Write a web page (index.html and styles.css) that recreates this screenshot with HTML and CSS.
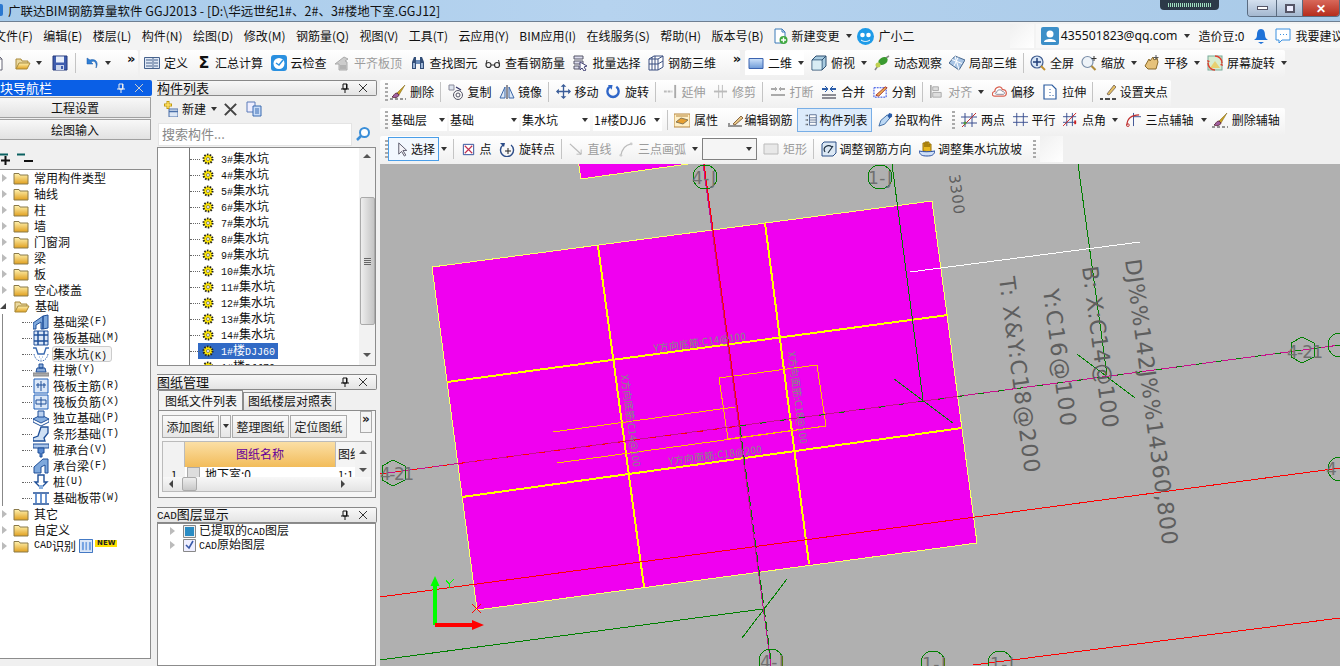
FILE: index.html
```html
<!DOCTYPE html>
<html lang="zh-CN">
<head>
<meta charset="utf-8">
<title>广联达BIM钢筋算量软件 GGJ2013</title>
<link rel="stylesheet" href="styles.css">
</head>
<body>
<svg class="sprite" xmlns="http://www.w3.org/2000/svg">
<defs>
<linearGradient id="gf" x1="0" y1="0" x2="0" y2="1"><stop offset="0" stop-color="#fff2b0"/><stop offset="1" stop-color="#e0a020"/></linearGradient>
<linearGradient id="gb" x1="0" y1="0" x2="0" y2="1"><stop offset="0" stop-color="#cfe3fa"/><stop offset="1" stop-color="#6d9ad8"/></linearGradient>
<symbol id="doc" viewBox="0 0 16 16"><path d="M3 1h7l3 3v11H3z" fill="#fff" stroke="#3a7ab8"/><path d="M10 1v3h3" fill="none" stroke="#3a7ab8"/><circle cx="11.500" cy="12" r="4" fill="#3fa83f"/><path d="M11.500 9.500v5M9 12h5" stroke="#fff" stroke-width="1.400"/></symbol>
<symbol id="docp" viewBox="0 0 16 16"><path d="M3 1h7l3 3v11H3z" fill="#fff" stroke="#667"/><path d="M10 1v3h3" fill="none" stroke="#667"/></symbol>
<symbol id="folderopen" viewBox="0 0 16 16"><path d="M1 14V4h5l1 2h6v2" fill="#ead9a0" stroke="#a98a3a"/><path d="M1 14l3-6h11l-3 6z" fill="url(#gf)" stroke="#a98a3a"/></symbol>
<symbol id="folder" viewBox="0 0 16 16"><path d="M1 3.500h5l1 1.500h8v9H1z" fill="url(#gf)" stroke="#8a7a4a"/></symbol>
<symbol id="save" viewBox="0 0 16 16"><path d="M1 1h14v14H1z" fill="#3e5cae" stroke="#25387a"/><path d="M4 1.500h8v6H4z" fill="#e8eefa"/><path d="M4 10h8v5H4z" fill="#c9d3ea"/><path d="M9 11h2v3H9z" fill="#3e5cae"/></symbol>
<symbol id="undo" viewBox="0 0 16 16"><path d="M3 3v6h6L7 7c3-2 6 0 5 6 3-5 0-10-6-8z" fill="#2f7fd6" stroke="#1d5aa5" stroke-width=".5"/></symbol>
<symbol id="define" viewBox="0 0 16 16"><path d="M.5 2.500h15v11H.5z" fill="#dfe8f5" stroke="#46628c"/><path d="M2 5h6M2 8h6M2 11h6M10 5h4M10 8h4M10 11h4M9 3v10" stroke="#46628c"/></symbol>
<symbol id="cloudchk" viewBox="0 0 16 16"><rect width="16" height="16" y="0" rx="3" fill="#2a90e0"/><circle cx="8" cy="8.500" r="5.500" fill="#fff"/><path d="M5 8l3 2 4-5" fill="none" stroke="#2a90e0" stroke-width="1.500"/></symbol>
<symbol id="aligntop" viewBox="0 0 16 16"><path d="M1 9l9-7 4 2-3 2 2 1v8H5V9z" fill="#ccc" stroke="#aaa"/><path d="M6 11h6M6 13h6" stroke="#999"/></symbol>
<symbol id="binoc" viewBox="0 0 16 16"><path d="M2 14V7l2-5h2v12zM10 14V2h2l2 5v7z" fill="#334e78"/><path d="M6 5h4v4H6z" fill="#6d8db8"/><path d="M3 8h2v5H3zM11 8h2v5h-2z" fill="#9db6d8"/></symbol>
<symbol id="glasses" viewBox="0 0 16 16"><circle cx="3.500" cy="10" r="2.500" fill="none" stroke="#333" stroke-width="1.200"/><circle cx="12" cy="10" r="2.500" fill="none" stroke="#333" stroke-width="1.200"/><path d="M6 10h3.500M1 9l1-4M14.500 9l-1-4" stroke="#333"/></symbol>
<symbol id="batch" viewBox="0 0 16 16"><path d="M1 1h9v3H1zM1 6h9v3H1zM1 11h5v3H1z" fill="#dde" stroke="#556"/><path d="M7 7l7 4-3 1 2 3-2 1-2-3-2 2z" fill="#fff" stroke="#447"/></symbol>
<symbol id="rebar3d" viewBox="0 0 16 16"><path d="M1 4l5-3h9v11l-5 3H1zM1 4h9v11M10 4l5-3M4 2v13M7 1v14M1 9h9l5-3" fill="#fff" stroke="#3a4f80"/></symbol>
<symbol id="rect2d" viewBox="0 0 16 16"><path d="M1 3.500h14v10H1z" fill="url(#gb)" stroke="#3c64b0"/></symbol>
<symbol id="box3d" viewBox="0 0 16 16"><path d="M1 5l4-4h10v10l-4 4H1z" fill="#a8cbe0" stroke="#2c4f70"/><path d="M1 5h10v10M11 5l4-4" fill="none" stroke="#2c4f70"/><path d="M1.500 5.500h9v9h-9z" fill="#d8ecf4"/></symbol>
<symbol id="orbit" viewBox="0 0 16 16"><path d="M1 15C4 10 8 5 15 1" fill="none" stroke="#888" stroke-width="1.500"/><ellipse cx="9" cy="6" rx="5" ry="3.500" transform="rotate(-30 9 6)" fill="#3a9a30"/><circle cx="4" cy="10" r="2.500" fill="#c0d050"/></symbol>
<symbol id="local3d" viewBox="0 0 16 16"><path d="M0 8l6-7 10 4-6 10z" fill="#a8c4e4" stroke="#48688e"/><path d="M3 4.500l10 4M6 1l4 14M9 2.500L5 11" stroke="#fff"/></symbol>
<symbol id="fullscr" viewBox="0 0 16 16"><circle cx="7" cy="7" r="6" fill="#d8e6f6" stroke="#405d90" stroke-width="1.200"/><path d="M7 3v8M3 7h8" stroke="#203e78" stroke-width="1.500"/><path d="M11 11l4 4" stroke="#c09030" stroke-width="2"/></symbol>
<symbol id="zoomi" viewBox="0 0 16 16"><circle cx="6.500" cy="7" r="5.500" fill="#eef3f8" stroke="#7a8ea8" stroke-width="1.200"/><path d="M10.500 11l4 4" stroke="#b08c3c" stroke-width="2.200"/><path d="M13 1v5M10.500 3.500h5" stroke="#333"/></symbol>
<symbol id="hand" viewBox="0 0 16 16"><path d="M1 11l4-7 1 2 3-4 1 3 3-2 1 4-2 7H4z" fill="#e6c27a" stroke="#8a6a2a"/><path d="M12 0v5M9.500 2.500h5" stroke="#555"/></symbol>
<symbol id="screenrot" viewBox="0 0 16 16"><rect x="1" y="1" width="14" height="14" fill="#d8ecd0" stroke="#7a9"/><path d="M3 13l5-7 5 7z" fill="#e8d070"/><path d="M8 1a7 7 0 0 1 7 7M8 15a7 7 0 0 1-7-7" fill="none" stroke="#e04030" stroke-width="1.500"/><path d="M1 8l-1-3 3 1zM15 8l1 3-3-1z" fill="#e04030"/></symbol>
<symbol id="brush" viewBox="0 0 16 16"><path d="M15 1L7 9l2 2z" fill="#c9a020" stroke="#7a6010" stroke-width=".5"/><path d="M7 9c-3 0-3 3-5 4 2 1 6 1 7-2z" fill="#a060a0" stroke="#634"/><path d="M0 15h16" stroke="#333" stroke-dasharray="3 2"/></symbol>
<symbol id="copyc" viewBox="0 0 16 16"><path d="M1 1h5v5H1z" fill="#dde4ee" stroke="#889"/><circle cx="10" cy="11" r="4.500" fill="none" stroke="#556"/><circle cx="10" cy="11" r="2" fill="none" stroke="#556"/><path d="M8 3l5 3" stroke="#336" stroke-width="1.200"/></symbol>
<symbol id="mirror" viewBox="0 0 16 16"><path d="M8 1v14" stroke="#223"/><path d="M6 3L1 14h5zM10 3l5 11h-5z" fill="#dce8f6" stroke="#3a66a8"/></symbol>
<symbol id="move" viewBox="0 0 16 16"><path d="M8 1v14M1 8h14" stroke="#3a5c98" stroke-width="1.400"/><path d="M8 0l3 3H5zM8 16l-3-3h6zM0 8l3-3v6zM16 8l-3 3V5z" fill="#3a5c98"/></symbol>
<symbol id="rotateb" viewBox="0 0 16 16"><path d="M4 3a6 6 0 1 0 7 0" fill="none" stroke="#2f66c8" stroke-width="2.500"/><path d="M2 1l5 0-1 5z" fill="#2f66c8"/></symbol>
<symbol id="extend" viewBox="0 0 16 16"><path d="M1 8h9" stroke="#bbb" stroke-width="2" stroke-dasharray="3 1"/><path d="M13 1v14" stroke="#aaa" stroke-width="2"/></symbol>
<symbol id="trim" viewBox="0 0 16 16"><path d="M1 8h14" stroke="#bbb" stroke-width="2"/><path d="M6 1v14M10 1v14" stroke="#bbb"/></symbol>
<symbol id="breakg" viewBox="0 0 16 16"><path d="M1 5h5M10 5h5M1 11h14" stroke="#aaa" stroke-width="2"/><path d="M5 3l2 2-2 2M11 3L9 5l2 2" stroke="#aaa" fill="none"/></symbol>
<symbol id="merge" viewBox="0 0 16 16"><path d="M1 11h14M1 14h14" stroke="#223" /><path d="M1 5h5M10 5h5" stroke="#2a5caa" stroke-width="2"/><path d="M4 2l3 3-3 3M12 2L9 5l3 3" fill="none" stroke="#2a5caa"/></symbol>
<symbol id="split" viewBox="0 0 16 16"><path d="M1 4h13v10H1z" fill="#fff" stroke="#1d3ce0" stroke-dasharray="2 1"/><path d="M3 12L13 3l2 1-9 9z" fill="#e8b050" stroke="#a33"/></symbol>
<symbol id="alignl" viewBox="0 0 16 16"><path d="M2 1v14" stroke="#999" stroke-width="1.500"/><path d="M4 3h6v4H4zM4 9h9v5H4z" fill="#ddd" stroke="#aaa"/></symbol>
<symbol id="offset" viewBox="0 0 16 16"><path d="M3 13C-1 13 0 8 3 8 3 3 10 1 11 6c5-1 6 7 1 7z" fill="#fff" stroke="#d86050" stroke-width="1.300"/><path d="M5 11c-2 0-2-2 0-2 0-3 5-4 6-1 3 0 3 3 1 3z" fill="none" stroke="#889"/></symbol>
<symbol id="stretch" viewBox="0 0 16 16"><path d="M2 1h8l4 4v10H2z" fill="#fff" stroke="#2c5ca0" stroke-width="1.200"/><path d="M8 5v1M8 8v1M8 11v1M11 11v1" stroke="#2c5ca0"/></symbol>
<symbol id="grip" viewBox="0 0 16 16"><path d="M7 10l7-9 2 2-7 8z" fill="#e8c060" stroke="#876"/><path d="M0 15h3M5 15h5M12 15h4" stroke="#111" stroke-width="1.500"/></symbol>
<symbol id="attr" viewBox="0 0 16 16"><path d="M0 2h16v13H0z" fill="#fff0c8" stroke="#b8863c"/><path d="M2 10l5-4 7 2-5 4z" fill="#e8a030" stroke="#875"/><path d="M2 4h12" stroke="#b8863c"/></symbol>
<symbol id="editr" viewBox="0 0 16 16"><path d="M1 14h14M1 12h2" stroke="#333"/><path d="M6 12l8-8 2 2-8 7z" fill="#e8c888" stroke="#864"/></symbol>
<symbol id="listi" viewBox="0 0 16 16"><path d="M1 2h3M1 8h3M1 14h3" stroke="#333" stroke-dasharray="1 1" stroke-width="2"/><path d="M6 1h9v14H6zM6 5h9M6 8h9M6 11h9" fill="#fff" stroke="#38507a"/></symbol>
<symbol id="pick" viewBox="0 0 16 16"><path d="M1 15l2-6 7-6 3 3-6 7z" fill="#bcd8f4" stroke="#3a68a0"/><path d="M10 4l2-3 3 1 0 3-3 2z" fill="#2a5ca8"/></symbol>
<symbol id="twopt" viewBox="0 0 16 16"><path d="M4 1v14M11 1v14M0 5h16M0 11h16" stroke="#3a4f90"/><path d="M1 15L15 1" stroke="#c03030"/><circle cx="4" cy="11" r="1.500" fill="#4a9a40"/></symbol>
<symbol id="para" viewBox="0 0 16 16"><path d="M4 1v14M11 1v14M0 5h16M0 11h16" stroke="#3a4f90"/></symbol>
<symbol id="anglei" viewBox="0 0 16 16"><path d="M4 1v14M10 1v14M0 5h14M0 11h14" stroke="#3a4f90"/><path d="M0 15L14 1" stroke="#d02020"/><path d="M13 9v4" stroke="#d02020" stroke-width="2"/></symbol>
<symbol id="arc3" viewBox="0 0 16 16"><path d="M8 1v14M8 5h8" stroke="#3a4f90"/><path d="M1 14C1 7 6 3 14 3" fill="none" stroke="#c03030" stroke-width="1.200"/><circle cx="2" cy="14" r="1.500" fill="none" stroke="#c03030"/></symbol>
<symbol id="cursor" viewBox="0 0 16 16"><path d="M4 1v12l3-3 3 5 1.500-1-3-5h4z" fill="#f4f4f8" stroke="#556"/></symbol>
<symbol id="point" viewBox="0 0 16 16"><path d="M2.500 2.500h11v11h-11z" fill="#fff" stroke="#2c4c98"/><path d="M4 4l8 8M12 4l-8 8" stroke="#c03050" stroke-width="1.200"/></symbol>
<symbol id="rotpt" viewBox="0 0 16 16"><path d="M4 4a6.500 6.500 0 1 0 8 0" fill="none" stroke="#2c4c88" stroke-width="1.400"/><path d="M1 2l5 0-1 4z" fill="#2c4c88"/><path d="M9 7v6M6 10h6" stroke="#222"/></symbol>
<symbol id="lineg" viewBox="0 0 16 16"><path d="M1 2l12 11" stroke="#bbb" stroke-width="1.400"/><path d="M13 8v5H8" fill="none" stroke="#bbb"/></symbol>
<symbol id="arcg" viewBox="0 0 16 16"><path d="M2 15C3 7 7 3 13 2" fill="none" stroke="#bbb" stroke-width="1.400"/><circle cx="13" cy="2" r="1.500" fill="#ccc"/><circle cx="2" cy="14" r="1.500" fill="#ccc"/></symbol>
<symbol id="rectg" viewBox="0 0 16 16"><path d="M1 3h14v10H1z" fill="#e8e8e8" stroke="#bbb"/></symbol>
<symbol id="adjust" viewBox="0 0 16 16"><path d="M3 1h12v11l-3 3H1V3z" fill="#dce8f4" stroke="#2c5088"/><path d="M4 11c-3-5 3-8 7-5M7 12l5-7" fill="none" stroke="#234" stroke-width="1.200"/></symbol>
<symbol id="handw" viewBox="0 0 16 16"><path d="M4 10V2h2v4-5h2v5-5h2v5-3h2v8z" fill="#e8b820" stroke="#96700a"/><path d="M0 10c5 1 10 1 16 0-1 4-3 5-8 5s-7-1-8-5z" fill="#cfe0f8" stroke="#2a50a0"/></symbol>
<symbol id="new" viewBox="0 0 16 16"><path d="M6 0v8M2 4h8" stroke="#c09a10" stroke-width="3"/><path d="M6 1v6M3 4h6" stroke="#ffe060" stroke-width="1.500"/><path d="M7 8h9v8H7z" fill="#dce6f4" stroke="#4a6fa8"/><path d="M7 10.500h9" stroke="#4a6fa8" stroke-width="1.500"/></symbol>
<symbol id="xmark" viewBox="0 0 16 16"><path d="M2 2l12 12M14 2L2 14" stroke="#444" stroke-width="2.200"/></symbol>
<symbol id="copyb" viewBox="0 0 16 16"><path d="M1 1h8v10H1z" fill="#eef" stroke="#5a7ab8"/><path d="M7 5h8v10H7z" fill="#c8dcf8" stroke="#3a6ab0"/><path d="M9 8h4M9 10h4M9 12h4" stroke="#3a6ab0"/></symbol>
<symbol id="searchi" viewBox="0 0 16 16"><circle cx="9.500" cy="6.500" r="4.500" fill="#fff" stroke="#3a8ed8" stroke-width="2"/><path d="M6 10l-4 4" stroke="#3a8ed8" stroke-width="2.500"/></symbol>
<symbol id="pin" viewBox="0 0 10 10"><path d="M3 1h4v5H3zM1 6h8M5 6v4" fill="none" stroke="#111"/><path d="M6 1h1v5H6z" fill="#111"/></symbol>
<symbol id="closex" viewBox="0 0 10 10"><path d="M1 1l8 8M9 1L1 9" stroke="#333"/></symbol>
<symbol id="gear" viewBox="0 0 12 12"><circle cx="6" cy="6" r="4.500" fill="#ffe800"/><circle cx="6" cy="6" r="4.500" fill="none" stroke="#222" stroke-width="2" stroke-dasharray="1.500 1.300"/><circle cx="6" cy="6" r="1.500" fill="#fff" stroke="#444" stroke-width=".6"/></symbol>
<symbol id="jcl" viewBox="0 0 16 16"><path d="M0 15v-6l10-7v13H8V8l-5 3v4zM10 2l5-1v13l-5 1z" fill="#7ea8dc" stroke="#1f4f98"/></symbol>
<symbol id="fb" viewBox="0 0 16 16"><path d="M1 1h14v14H1z" fill="#dce8f8" stroke="#1f4f98"/><path d="M5 1v14M11 1v14M1 5h14M1 11h14" stroke="#1f4f98" stroke-width="1.500"/></symbol>
<symbol id="jsk" viewBox="0 0 16 16"><path d="M0 2h3l2 6h6l2-6h3" fill="none" stroke="#3a6ab0" stroke-width="1.400"/><path d="M1 8c1 5 4 7 7 7s6-2 7-7" fill="none" stroke="#3a6ab0" stroke-dasharray="1.500 1"/><path d="M6 11h1M9 11h1M7.500 13h1" stroke="#7aa2d8"/></symbol>
<symbol id="zd" viewBox="0 0 16 16"><path d="M6 2h4v4H6zM4 6h8l1 4H3z" fill="#88aad8" stroke="#1f4f98"/><path d="M0 11h16v3H0z" fill="#aaa" stroke="#888"/></symbol>
<symbol id="zj" viewBox="0 0 16 16"><path d="M1 1h14v14H1z" fill="#dce8f8" stroke="#1f5fb8"/><path d="M8 3v10M3 7h10M5 5v5M11 5v5" stroke="#1f4f98"/></symbol>
<symbol id="fj" viewBox="0 0 16 16"><path d="M1 1h14v14H1z" fill="#dce8f8" stroke="#1f5fb8"/><path d="M8 3v10M3 6h10M3 10h10M3 6v4M13 6v4" stroke="#1f4f98"/></symbol>
<symbol id="dl" viewBox="0 0 16 16"><path d="M0 9l8 4 8-4-8-4z" fill="#8ab0e0" stroke="#1f4f98"/><path d="M0 9v3l8 4 8-4V9" fill="none" stroke="#1f4f98"/><path d="M5 7V1h6v6z" fill="#bcd2f0" stroke="#1f4f98"/></symbol>
<symbol id="tx" viewBox="0 0 16 16"><path d="M0 15v-3l5-2 3-9 7 0v6l-4 5 1 3z" fill="#cfe0f4" stroke="#1f4f98" stroke-width="1.300"/></symbol>
<symbol id="zct" viewBox="0 0 16 16"><path d="M0 2h16v4H0z" fill="#aac4e8" stroke="#1f4f98"/><path d="M5 6h6v5H9v4H7v-4H5z" fill="#5a8ad0" stroke="#1f4f98"/></symbol>
<symbol id="ctl" viewBox="0 0 16 16"><path d="M1 15V9l9-8 5 0v14h-3V7L8 9v6z" fill="#7ea8dc" stroke="#1f4f98"/></symbol>
<symbol id="zh" viewBox="0 0 16 16"><path d="M5 1h6v7h3l-6 6-6-6h3z" fill="#fff" stroke="#1f4f98" stroke-width="1.400"/><path d="M6 11h4v4H6z" fill="#8ab0e0"/></symbol>
<symbol id="bd" viewBox="0 0 16 16"><path d="M0 3h16M0 14h16" stroke="#1f4f98" stroke-width="1.500"/><path d="M3 4v9M8 4v9M13 4v9" stroke="#6a94d0" stroke-width="2"/></symbol>
<symbol id="cadsb" viewBox="0 0 16 16"><path d="M.5.500h15v15H.5z" fill="#dce8f8" stroke="#1f5fb8"/><path d="M3 3h3v10H3zM7 3h2.500v10H7zM11 3h3v10h-3z" fill="#6a9ce0" stroke="#fff" stroke-width=".5"/></symbol>
</defs>
</svg>

<div class="app">
<header class="titlebar">
  <span class="appicon"></span>
  <span class="title">广联达BIM钢筋算量软件 GGJ2013 - [D:\华远世纪1#、2#、3#楼地下室.GGJ12]</span>
  <span class="meter"><i></i></span>
  <span class="winbtns"><b class="wmin"><i></i></b><b class="wmax"><i></i></b><b class="wclose">✕</b></span>
</header>

<nav class="menubar">
  <span class="mi first">文件(F)</span><span class="mi">编辑(E)</span><span class="mi">楼层(L)</span><span class="mi">构件(N)</span><span class="mi">绘图(D)</span><span class="mi">修改(M)</span><span class="mi">钢筋量(Q)</span><span class="mi">视图(V)</span><span class="mi">工具(T)</span><span class="mi">云应用(Y)</span><span class="mi">BIM应用(I)</span><span class="mi">在线服务(S)</span><span class="mi">帮助(H)</span><span class="mi m9">版本号(B)</span>
  <span class="mi ico m4"><svg class="i16"><use href="#doc"/></svg>新建变更<i class="ar"></i></span>
  <span class="mi ico"><svg class="i19" viewBox="0 0 19 19"><circle cx="9.500" cy="9.500" r="8.500" fill="#1e9be8"/><circle cx="6.500" cy="8" r="2.300" fill="#fff"/><circle cx="12.500" cy="8" r="2.300" fill="#fff"/><path d="M5 13c3 2 6 2 9 0" stroke="#fff" fill="none"/></svg>广小二</span>
  <span class="blank"></span>
  <span class="account">
    <svg class="i18" viewBox="0 0 18 18"><rect width="18" height="18" rx="2" fill="#3d8fc8"/><circle cx="9" cy="7" r="3.500" fill="#fff"/><path d="M3 15c0-4 12-4 12 0z" fill="#fff"/></svg>
    <span class="email">435501823@qq.com</span><i class="ar"></i>
    <span class="beans">造价豆:0</span>
    <svg class="i16 bell" viewBox="0 0 16 16"><path d="M8 1c3 0 4 3 4 6 0 2 1 4 3 5H1c2-1 3-3 3-5 0-3 1-6 4-6z" fill="#1f72d8"/><path d="M5 14h6l-3 2z" fill="#1f72d8"/></svg>
    <svg class="i16" viewBox="0 0 16 16"><path d="M1 1h14v11H7l-3 3v-3H1z" fill="#fff" stroke="#3a90e0"/><path d="M5 6.500h1M8 6.500h1M11 6.500h1" stroke="#3a90e0"/></svg>
    <span class="advice">我要建议</span>
  </span>
</nav>

<div class="toprow">
  <div class="bar b-first">
    <svg class="i16 doc-cut"><use href="#docp"/></svg>
    <svg class="i16 gapi"><use href="#folderopen"/></svg><i class="ar a-tight"></i>
    <svg class="i16 gapi"><use href="#save"/></svg><span class="sep"></span>
    <svg class="i16"><use href="#undo"/></svg><i class="ar a-tight"></i><span class="chev">»</span>
  </div>
  <div class="bar b-second">
    <span class="t"><svg class="i16"><use href="#define"/></svg>定义</span>
    <span class="t"><span class="sigma">Σ</span>汇总计算</span>
    <span class="t"><svg class="i16"><use href="#cloudchk"/></svg>云检查</span>
    <span class="t dis"><svg class="i16"><use href="#aligntop"/></svg>平齐板顶</span>
    <span class="t"><svg class="i16"><use href="#binoc"/></svg>查找图元</span>
    <span class="t"><svg class="i16"><use href="#glasses"/></svg>查看钢筋量</span>
    <span class="t"><svg class="i16"><use href="#batch"/></svg>批量选择</span>
    <span class="t"><svg class="i16"><use href="#rebar3d"/></svg>钢筋三维</span>
    <span class="chev c2">»</span>
  </div>
  <div class="bar b-third">
    <span class="t white"><svg class="i16"><use href="#rect2d"/></svg>二维<i class="ar"></i></span>
    <span class="t"><svg class="i16"><use href="#box3d"/></svg>俯视<i class="ar"></i></span>
    <span class="t"><svg class="i16"><use href="#orbit"/></svg>动态观察</span>
    <span class="t"><svg class="i16"><use href="#local3d"/></svg>局部三维</span><span class="sep"></span>
    <span class="t"><svg class="i16"><use href="#fullscr"/></svg>全屏</span>
    <span class="t"><svg class="i16"><use href="#zoomi"/></svg>缩放<i class="ar"></i></span>
    <span class="t"><svg class="i16"><use href="#hand"/></svg>平移<i class="ar"></i></span>
    <span class="t"><svg class="i16"><use href="#screenrot"/></svg>屏幕旋转<i class="ar a-rot"></i></span>
  </div>
</div>

<main class="main">
<aside class="nav">
  <div class="ptitle active"><span>块导航栏</span><svg class="pin"><use href="#pin"/></svg><svg class="pin"><use href="#closex"/></svg></div>
  <button class="navbtn">工程设置</button>
  <button class="navbtn">绘图输入</button>
  <div class="plusminus"><svg class="pmi" viewBox="0 0 34 12"><path d="M0 1.500h8" stroke="#0a6060" stroke-width="2"/><path d="M1 7.500h9M5.500 3v9" stroke="#111" stroke-width="2"/><path d="M17 1.500h8" stroke="#0a6060" stroke-width="2"/><path d="M24 8h9" stroke="#111" stroke-width="2"/></svg></div>
  <ul class="tree">
    <li class="n"><i class="tri"></i><svg class="i16"><use href="#folder"/></svg>常用构件类型</li>
    <li class="n"><i class="tri"></i><svg class="i16"><use href="#folder"/></svg>轴线</li>
    <li class="n"><i class="tri"></i><svg class="i16"><use href="#folder"/></svg>柱</li>
    <li class="n"><i class="tri"></i><svg class="i16"><use href="#folder"/></svg>墙</li>
    <li class="n"><i class="tri"></i><svg class="i16"><use href="#folder"/></svg>门窗洞</li>
    <li class="n"><i class="tri"></i><svg class="i16"><use href="#folder"/></svg>梁</li>
    <li class="n"><i class="tri"></i><svg class="i16"><use href="#folder"/></svg>板</li>
    <li class="n"><i class="tri"></i><svg class="i16"><use href="#folder"/></svg>空心楼盖</li>
    <li class="n"><i class="tri open"></i><svg class="i16"><use href="#folderopen"/></svg>基础</li>
    <li class="c"><svg class="i16"><use href="#jcl"/></svg>基础梁<em>(F)</em></li>
    <li class="c"><svg class="i16"><use href="#fb"/></svg>筏板基础<em>(M)</em></li>
    <li class="c sel"><svg class="i16"><use href="#jsk"/></svg><span>集水坑<em>(K)</em></span></li>
    <li class="c"><svg class="i16"><use href="#zd"/></svg>柱墩<em>(Y)</em></li>
    <li class="c"><svg class="i16"><use href="#zj"/></svg>筏板主筋<em>(R)</em></li>
    <li class="c"><svg class="i16"><use href="#fj"/></svg>筏板负筋<em>(X)</em></li>
    <li class="c"><svg class="i16"><use href="#dl"/></svg>独立基础<em>(P)</em></li>
    <li class="c"><svg class="i16"><use href="#tx"/></svg>条形基础<em>(T)</em></li>
    <li class="c"><svg class="i16"><use href="#zct"/></svg>桩承台<em>(V)</em></li>
    <li class="c"><svg class="i16"><use href="#ctl"/></svg>承台梁<em>(F)</em></li>
    <li class="c"><svg class="i16"><use href="#zh"/></svg>桩<em>(U)</em></li>
    <li class="c last"><svg class="i16"><use href="#bd"/></svg>基础板带<em>(W)</em></li>
    <li class="n"><i class="tri"></i><svg class="i16"><use href="#folder"/></svg>其它</li>
    <li class="n"><i class="tri"></i><svg class="i16"><use href="#folder"/></svg>自定义</li>
    <li class="n"><i class="tri"></i><svg class="i16"><use href="#folder"/></svg><em>CAD</em>识别<svg class="i16 cadsb"><use href="#cadsb"/></svg><span class="newb">NEW</span></li>
  </ul>
</aside>

<aside class="mid">
  <div class="ptitle"><span>构件列表</span><svg class="pin"><use href="#pin"/></svg><svg class="pin"><use href="#closex"/></svg></div>
  <div class="ctool">
    <svg class="i16"><use href="#new"/></svg><span class="ctext">新建</span><i class="ar a-tight"></i>
    <svg class="i14 cx"><use href="#xmark"/></svg><svg class="i16 cc"><use href="#copyb"/></svg>
  </div>
  <div class="search"><span class="sinput">搜索构件...</span><svg class="i16"><use href="#searchi"/></svg></div>
  <div class="listbox">
    <ul class="list">
      <li><svg class="gear"><use href="#gear"/></svg><span><em>3#</em>集水坑</span></li>
      <li><svg class="gear"><use href="#gear"/></svg><span><em>4#</em>集水坑</span></li>
      <li><svg class="gear"><use href="#gear"/></svg><span><em>5#</em>集水坑</span></li>
      <li><svg class="gear"><use href="#gear"/></svg><span><em>6#</em>集水坑</span></li>
      <li><svg class="gear"><use href="#gear"/></svg><span><em>7#</em>集水坑</span></li>
      <li><svg class="gear"><use href="#gear"/></svg><span><em>8#</em>集水坑</span></li>
      <li><svg class="gear"><use href="#gear"/></svg><span><em>9#</em>集水坑</span></li>
      <li><svg class="gear"><use href="#gear"/></svg><span><em>10#</em>集水坑</span></li>
      <li><svg class="gear"><use href="#gear"/></svg><span><em>11#</em>集水坑</span></li>
      <li><svg class="gear"><use href="#gear"/></svg><span><em>12#</em>集水坑</span></li>
      <li><svg class="gear"><use href="#gear"/></svg><span><em>13#</em>集水坑</span></li>
      <li><svg class="gear"><use href="#gear"/></svg><span><em>14#</em>集水坑</span></li>
      <li class="cur"><svg class="gear"><use href="#gear"/></svg><span><em>1#</em>楼<em>DJJ60</em></span></li>
      <li><svg class="gear"><use href="#gear"/></svg><span><em>1#</em>楼<em>DJJ70</em></span></li>
    </ul>
    <div class="vscroll"><i class="up"></i><b class="thumb"><u></u></b><i class="down"></i></div>
  </div>

  <div class="ptitle p2"><span>图纸管理</span><svg class="pin"><use href="#pin"/></svg><svg class="pin"><use href="#closex"/></svg></div>
  <div class="tabs"><span class="tab on">图纸文件列表</span><span class="tab">图纸楼层对照表</span></div>
  <div class="tabpanel">
    <div class="btns"><span class="btn b57">添加图纸</span><span class="btn b11"><i class="ar dark"></i></span><span class="btn b57">整理图纸</span><span class="btn b57">定位图纸</span><span class="chev c3">»</span></div>
    <div class="grid">
      <div class="gtop">
        <span class="rowno"></span><span class="hname">图纸名称</span><span class="hnext">图纸</span>
        <span class="r1">1</span><span class="r2"><i class="box"></i>地下室:0</span><span class="r3">1:1</span>
      </div>
      <div class="gv"><i class="up"></i><i class="down"></i></div>
      <div class="gh"><i class="left"></i><b></b><i class="right"></i></div>
    </div>
  </div>

  <div class="ptitle p3"><span><em class="cadt">CAD</em>图层显示</span><svg class="pin"><use href="#pin"/></svg><svg class="pin"><use href="#closex"/></svg></div>
  <ul class="cadtree">
    <li><i class="tri"></i><svg class="i13" viewBox="0 0 13 13"><path d="M.5.500h12v12H.5z" fill="#eee" stroke="#888"/><path d="M2 2h9v9H2z" fill="#2a8cc4"/></svg><span class="big">已提取的<em>CAD</em>图层</span></li>
    <li><i class="tri"></i><svg class="i13" viewBox="0 0 13 13"><path d="M.5.500h12v12H.5z" fill="#eef" stroke="#888"/><path d="M3 6l3 3 4-7" fill="none" stroke="#3858a8" stroke-width="1.600"/></svg><span><em>CAD</em>原始图层</span></li>
  </ul>
</aside>

<section class="work">
  <div class="row r-a">
    <div class="bar b-del">
      <i class="dots"></i>
      <span class="t"><svg class="i16"><use href="#brush"/></svg>删除</span><span class="sep"></span>
      <span class="t"><svg class="i16"><use href="#copyc"/></svg>复制</span>
      <span class="t tight"><svg class="i16"><use href="#mirror"/></svg>镜像</span><span class="sep"></span>
      <span class="t"><svg class="i14"><use href="#move"/></svg>移动</span>
      <span class="t"><svg class="i14"><use href="#rotateb"/></svg>旋转</span><span class="sep"></span>
      <span class="t dis"><svg class="i14"><use href="#extend"/></svg>延伸</span>
      <span class="t dis"><svg class="i14"><use href="#trim"/></svg>修剪</span><span class="sep"></span>
      <span class="t dis"><svg class="i16"><use href="#breakg"/></svg>打断</span>
      <span class="t"><svg class="i16"><use href="#merge"/></svg>合并</span>
      <span class="t"><svg class="i14"><use href="#split"/></svg>分割</span><span class="sep"></span>
      <span class="t dis"><svg class="i14"><use href="#alignl"/></svg>对齐<i class="ar a-tight"></i></span>
      <span class="t"><svg class="i14"><use href="#offset"/></svg>偏移</span>
      <span class="t"><svg class="i16"><use href="#stretch"/></svg>拉伸</span><span class="sep"></span>
      <span class="t"><svg class="i16"><use href="#grip"/></svg>设置夹点</span>
    </div>
  </div>
  <div class="row r-b">
    <div class="bar b-floor">
      <i class="dots"></i>
      <span class="combo c57">基础层<i class="ar"></i></span>
      <span class="combo c70">基础<i class="ar"></i></span>
      <span class="combo c69">集水坑<i class="ar"></i></span>
      <span class="combo c69">1#楼DJJ6<i class="ar"></i></span>
      <span class="sep s2"></span>
      <span class="t"><svg class="i16"><use href="#attr"/></svg>属性</span>
      <span class="t t1"><svg class="i18b"><use href="#editr"/></svg>编辑钢筋</span>
      <span class="t hot"><svg class="i16"><use href="#listi"/></svg>构件列表</span>
      <span class="t t3"><svg class="i14"><use href="#pick"/></svg>拾取构件</span>
      <i class="dots d2"></i>
      <span class="t"><svg class="i16"><use href="#twopt"/></svg>两点</span>
      <span class="t"><svg class="i14"><use href="#para"/></svg>平行</span>
      <span class="t"><svg class="i14"><use href="#anglei"/></svg>点角<i class="ar"></i></span>
      <span class="t t2"><svg class="i14"><use href="#arc3"/></svg>三点辅轴<i class="ar"></i></span>
      <span class="t"><svg class="i16"><use href="#brush"/></svg>删除辅轴</span>
    </div>
  </div>
  <div class="row r-c">
    <div class="bar b-sel">
      <i class="dots"></i>
      <span class="t selbtn"><svg class="i14"><use href="#cursor"/></svg>选择</span><i class="ar a-sel"></i><span class="sep"></span>
      <span class="t"><svg class="i14"><use href="#point"/></svg>点</span>
      <span class="t"><svg class="i16"><use href="#rotpt"/></svg>旋转点</span><span class="sep"></span>
      <span class="t dis"><svg class="i14"><use href="#lineg"/></svg>直线</span>
      <span class="t dis"><svg class="i14"><use href="#arcg"/></svg>三点画弧<i class="ar"></i></span>
      <span class="dropbox"><i class="ar"></i></span>
      <span class="t dis"><svg class="i16"><use href="#rectg"/></svg>矩形</span><span class="sep"></span>
      <span class="t t4"><svg class="i16"><use href="#adjust"/></svg>调整钢筋方向</span>
      <span class="t t4"><svg class="i16"><use href="#handw"/></svg>调整集水坑放坡</span>
      <i class="dots d3"></i><span class="blank2"></span>
    </div>
  </div>
  <svg class="canvas" viewBox="380 164 960 502" xmlns="http://www.w3.org/2000/svg">
    <rect x="380" y="164" width="960" height="502" fill="#b0b0b0"/>
    <g class="crisp">
      <polygon points="578,160 581,179 688,164 688,160" fill="#f000f0" stroke="#ffff66"/>
      <polygon points="432,267 932,201 977,543 477,610" fill="#f000f0" stroke="#ffff66"/>
      <g stroke="#ffff00" stroke-width="2" fill="none">
        <path d="M598,246L644,587M765,223L809,564M447,382L948,315M462,497L962,428"/>
      </g>
      <g stroke="#ffc000" fill="none">
        <path d="M719,378L817,365L826,426L728,439ZM553,432L735,407M557,463L826,426"/>
      </g>
      <path d="M380,597L1340,468M973,665L1340,618" stroke="#ff0000" fill="none"/>
      <path d="M380,660L763,609M742,638L787,579M1078,164L1107,375M1077,354L1135,398M892,164L923,400M894,379L953,423" stroke="#008000" fill="none"/>
      <path d="M910,272L1140,242" stroke="#ffffff" fill="none"/>
      <path d="M704,164L740,427" stroke="#ff0000" fill="none"/>
      <path d="M703,164L739,427L771,666" stroke="#c0108f" fill="none"/>
      <path d="M740,427L771,660" stroke="#008000" fill="none" stroke-dasharray="10 4"/>
      <path d="M380,474L1340,345" stroke="#c8108c" fill="none"/>
      <path d="M380,474L740,426" stroke="#ff0000" fill="none" stroke-dasharray="6 10"/>
      <path d="M740,426L1340,345" stroke="#008000" fill="none" stroke-dasharray="6 14"/>
      <g fill="none" stroke="#008000">
        <circle cx="705" cy="177" r="12"/>
        <circle cx="880" cy="177" r="12"/>
        <polygon points="393,460 405,466 405,480 393,486 382,480 382,466"/>
        <polygon points="1302,337 1314,343 1314,357 1302,363 1291,357 1291,343"/>
        <circle cx="1340" cy="345" r="12"/>
        <circle cx="1340" cy="469" r="12"/>
        <circle cx="771" cy="661" r="12"/>
        <circle cx="933" cy="663" r="12"/>
        <circle cx="1000" cy="663" r="12"/>
      </g>
      <path d="M472,604L481,613M481,604L472,613" stroke="#ff0000"/>
      <path d="M446,580L449,584L454,579M449,584V588" stroke="#00ff00" fill="none"/>
    </g>
    <path d="M433,625V586H430.500L435,576L439.500,586H437V625Z" fill="#00ff00"/>
    <path d="M435,623H472V620L484,625L472,630V627H435Z" fill="#ff0000"/>
    <g class="bubtext">
      <text x="692" y="184" textLength="24">4-J</text>
      <text x="868" y="184" textLength="24">1-J</text>
      <text x="380" y="480" textLength="34">4-21</text>
      <text x="1287" y="358" textLength="36">4-21</text>
      <text x="1326" y="475">4</text>
      <text x="760" y="668" textLength="24">4-J</text>
      <text x="922" y="670" textLength="24">1-J</text>
      <text x="990" y="670" textLength="24">1-J</text>
    </g>
    <g class="bigtext">
      <text transform="translate(999 278) rotate(82.5)" textLength="197">T: X&amp;Y:C18@200</text>
      <text transform="translate(1043 290) rotate(82.5)" textLength="138">Y:C16@100</text>
      <text transform="translate(1082 267) rotate(82.5)" textLength="163">B: X:C14@100</text>
      <text transform="translate(1125 260) rotate(82.5)" textLength="288">DJ%%142J%%14360,800</text>
      <text class="s3300" transform="translate(949 175) rotate(82.5)" textLength="40">3300</text>
    </g>
    <g class="smalltext">
      <text transform="translate(654 352) rotate(-7.500)" textLength="93">Y方向底筋:C14@100</text>
      <text transform="translate(669 465) rotate(-7.500)" textLength="94">Y方向面筋:C18@200</text>
      <text transform="translate(621 375) rotate(82.500)" textLength="93">X方向底筋:C14@100</text>
      <text transform="translate(788 352) rotate(82.500)" textLength="93">X方向面筋:C18@100</text>
    </g>
  </svg>
</section>
</main>
</div>
</body>
</html>
```
FILE: styles.css
```css
*{box-sizing:border-box}
html,body{margin:0;padding:0;width:1340px;height:666px;overflow:hidden}
body{font:12px/16px "Noto Sans CJK SC","Liberation Sans",sans-serif;color:#111;background:#f0f0f0}
ul{list-style:none;margin:0;padding:0}
em{font-style:normal;font-family:"Liberation Mono",monospace;font-size:10px}
i{font-style:normal}
svg{flex:none;display:block}
.sprite{width:0;height:0}
.i13{width:13px;height:13px}.i14{width:15px;height:15px}.i16{width:16px;height:16px}.i18{width:18px;height:18px}.i18b{width:18px;height:16px}.i19{width:19px;height:19px}
.app{width:1340px;height:666px;display:flex;flex-direction:column;overflow:hidden}

.titlebar{height:22px;flex:none;display:flex;align-items:flex-start;background:linear-gradient(90deg,#a7cbea,#b6d3ef 45%,#a9cae8);border-bottom:1px solid #6e7f92;overflow:hidden}
.appicon{width:3px;height:12px;margin-top:4px;background:#2a78d0;border-radius:0 2px 2px 0}
.title{font-size:12.5px;line-height:21px;margin-left:5px;white-space:nowrap;color:#111}
.meter{width:59px;height:10px;margin-left:auto;background:#2c3a48;border-radius:0 0 4px 4px;display:flex;align-items:center;justify-content:center}
.meter i{width:44px;height:4px;background:repeating-linear-gradient(90deg,#9fe0c0 0 1px,#2c3a48 1px 2px)}
.winbtns{margin-left:28px;display:flex;height:17px;width:93px;flex:none;border:1px solid #5a6b80;border-top:0;border-radius:0 0 4px 4px;overflow:hidden}
.winbtns b{display:flex;align-items:center;justify-content:center;background:linear-gradient(#d4e0ee,#a4b8d0);border-right:1px solid #5a6b80;font-weight:700}
.wmin{width:29px}.wmax{width:26px}
.wclose{flex:1;color:#fff;font-size:12px;background:linear-gradient(#d8685a,#b52c1c)!important;border-right:0!important}
.wmin i{width:11px;height:4px;background:#fff;border:1px solid #556}
.wmax i{width:10px;height:9px;background:#eef;border:2px solid #556}

.menubar{height:28px;flex:none;display:flex;align-items:center;white-space:nowrap;background:#f3f3f3;overflow:hidden}
.mi{margin-right:10.4px;display:flex;align-items:center;flex:none}
.mi.first{margin-left:-6px}
.mi.m9{margin-right:9px}
.mi.m4{margin-right:4px}
.mi.ico svg{margin-right:3px}
.ar{display:inline-block;flex:none;width:0;height:0;border:3.500px solid transparent;border-top:4px solid #333;border-bottom:0;margin:0 0 0 7px}
.ar.a-tight{margin-left:5px}
.blank{width:24px;height:24px;margin-left:85px;background:linear-gradient(135deg,#f0f0f0,#fff);flex:none}
.account{display:flex;align-items:center;margin-left:2px;height:24px;padding-left:5px;background:#f8f8f8;flex:none}
.email{font-size:12.2px;margin-left:2px;font-family:"Noto Sans","Liberation Sans",sans-serif}
.account .ar{margin-right:8px}
.bell{margin:0 6px 0 9px}
.advice{margin-left:4px}

.toprow{height:30px;flex:none;display:flex;align-items:flex-start;white-space:nowrap}
.bar{display:flex;align-items:center;height:28px;background:linear-gradient(#fff,#f0f0f0);border-radius:2px;flex:none}
.toprow .bar{padding-bottom:2px}
.r-a .bar,.r-b .bar{padding-bottom:5px}
.r-c .bar{padding-bottom:2px}
.b-first{width:138px;margin-right:2px;overflow:hidden}
.doc-cut{margin-left:-11px}
.gapi{margin-left:10px}
.b-first .sep{margin:0 8px 0 7px}
.b-second{width:600px;padding-left:4px;margin-right:5px}
.b-third{padding-left:3px;padding-right:2px;width:540px}
.b-third .t{margin-right:7px}
.sep{width:1px;height:20px;background:#c4c4c4;margin:0 6.5px 0 -1.5px;flex:none}
.t{display:inline-flex;align-items:center;gap:4px;margin-right:7.5px;flex:none;height:24px}
.t .ar{margin-left:2px}
.t.dis{color:#9c9c9c}
.t.tight{gap:3px}
.t.white{background:#fff;margin-left:-3px;padding-left:3px}
.sigma{font:700 16px/16px "DejaVu Sans",sans-serif;width:9px;margin:0 3.500px 0 3px;color:#111}
.chev{font:700 13px/13px "DejaVu Sans",sans-serif;margin:-10px 0 0 16px}
.chev.c2{margin-left:9px}
.chev.c3{margin:-8px 0 0 12px;border:1px solid #aaa;height:22px;width:12px;line-height:14px;text-align:center;font-size:12px;background:#f4f4f4}

.main{flex:1;display:flex;min-height:0}
.nav{width:152px;flex:none;display:flex;flex-direction:column}
.ptitle{height:16px;flex:none;display:flex;align-items:center;font-size:13px;line-height:16px;white-space:nowrap;background:linear-gradient(#f8f8f8,#e4e4e4);border:1px solid #888;border-left:0;border-radius:0 2px 2px 0}
.ptitle span{flex:1}
.ptitle .pin{width:10px;height:10px;margin-right:8px}
.ptitle.active{background:#0a5fe6;color:#fff;border:0;height:16px;margin-bottom:1px}
.ptitle.active .pin{filter:invert(1)}
.navbtn{display:block;height:21px;flex:none;margin:0 0 1px;padding:1px 0 0;width:151px;background:linear-gradient(#f8f8f8,#e2e2e2);border:1px solid #a0a0a0;border-left:0;font:12px/18px "Noto Sans CJK SC",sans-serif;color:#111}
.plusminus{height:28px;flex:none;padding-top:12px}
.pmi{width:34px;height:12px}
.tree{flex:none;height:490px;width:151px;background:#fff;border:1px solid #8c8c8c;border-left:0;overflow:hidden}
.tree li{height:16px;display:flex;align-items:center;white-space:nowrap}
.tree .n svg{margin-right:5px}
.tree .n .tri{margin:0 6px 0 2px}
.tree .n svg.cadsb{margin:0 0 0 3px;width:14px;height:14px}
.tri{width:0;height:0;flex:none;border:4px solid transparent;border-left:5px solid #bbb;border-right:0}
.tri.open{border:3px solid #444;border-top-color:transparent;border-left-color:transparent;margin-left:0!important;margin-right:8px!important}
.tree .c{padding-left:33px;position:relative;background:linear-gradient(#888,#888) 2px 0/1px 16px no-repeat}
.tree .c svg{margin-right:4px}
.tree .c::before{content:"";width:10px;border-top:1px dotted #666;position:absolute;left:22px;top:8px}
.tree .sel span{border:1px solid #ccc;border-radius:3px;background:#f4f4f4;padding:0 4px 0 0;margin-left:-1px;height:16px;line-height:14px}
.newb{font:700 7px/7px "DejaVu Sans",sans-serif;background:#ffe000;color:#222;padding:0 2px;margin:-6px 0 0 2px;height:7px}

.mid{width:221px;margin-left:5px;flex:none;display:flex;flex-direction:column}
.mid .ptitle{width:220px}
.ctool{height:26px;flex:none;display:flex;align-items:center;padding-left:5px}
.ctext{margin-left:4px}
.cx{margin-left:6px}
.cc{margin-left:8px}
.search{height:24px;flex:none;display:flex;align-items:center;width:219px;margin-left:1px}
.sinput{width:194px;height:23px;background:#fff;color:#888;padding-left:3px;line-height:20px;border:1px solid #e4e4e4;font-size:13px}
.search svg{margin-left:3px}
.listbox{height:219px;flex:none;width:219px;margin-top:1px;background:#fff;border:1px solid #8c8c8c;display:flex;overflow:hidden}
.list{flex:1;padding-top:3px;background:linear-gradient(#777,#777) 31px 0/1px 100% no-repeat;min-width:0}
.list li{height:16px;display:flex;align-items:center;white-space:nowrap;padding-left:44px;position:relative}
.list li::before{content:"";width:10px;border-top:1px dotted #666;position:absolute;left:32px;top:8px}
.gear{width:12px;height:12px;margin-right:7px}
.list .cur{background:linear-gradient(#316ac5,#316ac5) 40px 0/80px 16px no-repeat;color:#fff}
.vscroll{width:16px;flex:none;background:#f2f2f2;display:flex;flex-direction:column;align-items:center;padding-top:6px}
.up,.down{display:block;width:0;height:0;border:4px solid transparent}
.up{border-bottom:4px solid #555;border-top:0}
.down{border-top:4px solid #555;border-bottom:0}
.thumb{width:15px;height:128px;margin:39px 0 28px;background:linear-gradient(90deg,#eee,#c4c4c4);border:1px solid #aaa;border-radius:2px;display:flex;align-items:center;justify-content:center;flex:none}
.thumb u{display:block;width:7px;height:7px;background:repeating-linear-gradient(#666 0 1px,#ddd 1px 2px)}
.p2{margin-top:8px}
.tabs{height:19px;flex:none;display:flex;align-items:flex-end;margin-top:1px;padding-left:1px}
.tab{height:18px;line-height:16px;background:linear-gradient(#f6f6f6,#e2e2e2);border:1px solid #8c8c8c;border-bottom:0;padding:0 3px 0 4px;font-size:12px;white-space:nowrap}
.tab.on{height:20px;background:#f4f4f4;padding:0 5px 0 6px;line-height:19px;border-radius:1px 1px 0 0}
.tabpanel{height:88px;flex:none;width:218px;margin-left:1px;border:1px solid #8c8c8c;background:#f6f6f6;padding:3px 3px}
.btns{display:flex;align-items:center;height:24px;color:#222}
.btn{height:23px;line-height:21px;text-align:center;background:linear-gradient(#fafafa,#e6e6e6);border:1px solid #aaa;margin-right:1px;flex:none}
.b57{width:57px}.b11{width:11px;display:flex;align-items:center;justify-content:center}
.btn .ar{margin:0}
.grid{margin-top:3px;height:51px;width:210px;background:#eee;border:1px solid #bbb;display:grid;grid-template-columns:192px 16px;grid-template-rows:35px 14px;overflow:hidden}
.gtop{display:grid;grid-template-columns:22px 150px 20px;grid-template-rows:25px 12px;overflow:hidden;background:#fff}
.rowno{background:#f2f2f2;border-right:1px solid #bbb}
.hname{background:linear-gradient(#fbdfa5,#f2bc5a);color:#660099;text-align:center;line-height:24px;font-size:12px}
.hnext{background:#f4f4f4;line-height:24px;font-size:12px;overflow:hidden;white-space:nowrap;padding-left:2px;border-left:1px solid #bbb}
.r1{text-align:center;background:#f2f2f2;font-size:11px;line-height:14px}
.r2{display:flex;align-items:flex-start;padding-left:2px;line-height:14px;white-space:nowrap;gap:5px}
.r3{font-size:11px;line-height:14px;padding-left:3px;overflow:hidden}
.box{width:13px;height:13px;background:#ddd;border:1px solid #aaa;flex:none}
.gv{grid-row:1;grid-column:2;display:flex;flex-direction:column;align-items:center;gap:14px;padding-top:8px;background:#f2f2f2}
.gh{grid-row:2;grid-column:1/3;display:flex;align-items:center;background:linear-gradient(#f8f8f8,#e4e4e4);padding-left:6px}
.left{width:0;height:0;border:4px solid transparent;border-right:4px solid #444;border-left:0}
.right{width:0;height:0;border:4px solid transparent;border-left:4px solid #444;border-right:0;margin-left:144px}
.gh b{width:15px;height:14px;margin-left:9px;background:linear-gradient(#eee,#c8c8c8);border:1px solid #aaa;border-radius:2px}
.p3{margin-top:9px}
.cadt{font-size:11px}
.cadtree{flex:1;width:219px;background:#fff;border:1px solid #8c8c8c;padding-top:0;padding-left:12px}
.cadtree li{height:14px;line-height:14px;display:flex;align-items:center;white-space:nowrap}
.cadtree li .tri{margin-right:8px;border-width:4px;border-left:5px solid #bbb}
.cadtree svg{margin-right:3px}

.work{flex:1;margin-left:2px;min-width:0;display:flex;flex-direction:column}
.row{height:28px;flex:none;display:flex;white-space:nowrap;overflow:hidden}
.dots{width:3px;height:18px;flex:none;margin:0 2px 0 3px;background:repeating-linear-gradient(#aaa 0 2px,transparent 2px 4px)}
.d2{margin:0 6px 0 2px}
.d3{margin:0 4px 0 3px}
.b-del{padding-left:2px;width:791px}
.b-floor{padding-left:2px;width:905px}
.combo{height:22px;display:flex;align-items:center;background:#fff;padding-left:1px;margin-right:2px;justify-content:space-between;flex:none}
.combo .ar{margin-right:2px}
.c57{width:57px}.c70{width:70px}.c69{width:69px;margin-right:3px}
.s2{margin:0 6px 0 2px}
.t1{margin-right:4px;gap:1px}
.hot{background:#dcebfb;border:1px solid #78aee6;padding:0 3px 0 7px;gap:3px;margin-right:6px}
.hot svg{width:12px}
.t3{gap:2px}
.t2{gap:5px;margin-right:5px}
.t4{gap:3px}
.b-sel{padding-left:2px;width:682px}
.b-sel>.dots:first-child{margin-right:0}
.selbtn{border:1px solid #4a9ee8;width:51px;background:#f2f8fe;padding-left:6px;margin:0;gap:1px}
.a-sel{margin:0 7.5px 0 2px}
.dropbox{width:55px;height:22px;border:1px solid #808080;background:#f5f5f5;display:flex;align-items:center;justify-content:flex-end;margin:0 6px 0 -3.5px;padding-right:4px;flex:none}
.blank2{width:23px;height:26px;background:linear-gradient(135deg,#f0f0f0,#fff);flex:none}
.canvas{flex:none;width:960px;height:502px}
.crisp{shape-rendering:crispEdges}
.bubtext text{font:17px "DejaVu Sans",sans-serif;fill:#707070}
.bigtext text{font:22px "DejaVu Sans",sans-serif;fill:#5e5e5e}
.bigtext .s3300{font-size:15px}
.smalltext text{font:10px "Noto Sans CJK SC",sans-serif;fill:#7f8f7f}
```
